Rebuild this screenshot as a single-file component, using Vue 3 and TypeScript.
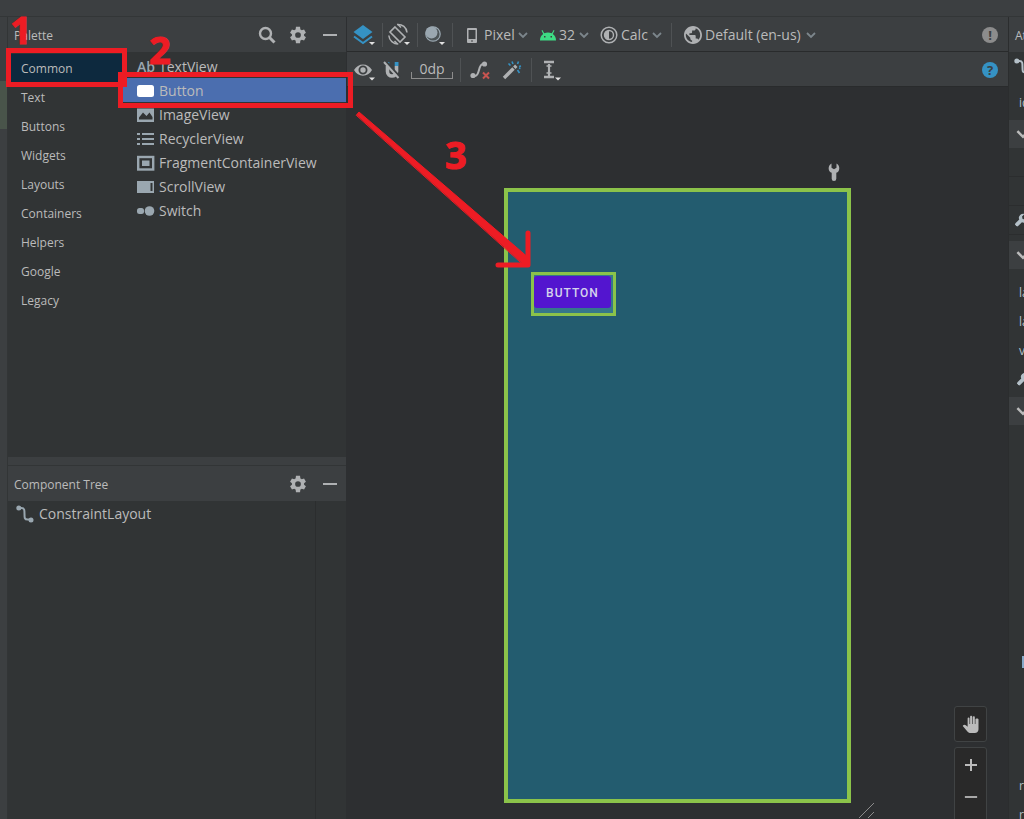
<script setup lang="ts">
import { ref } from 'vue'

interface PaletteItem {
  name: string
  icon: string
}

interface DeviceOption {
  id: string
  label: string
  icon: string
  value: string
}

const categories: string[] = [
  'Common', 'Text', 'Buttons', 'Widgets', 'Layouts', 'Containers', 'Helpers', 'Google', 'Legacy',
]

const items: PaletteItem[] = [
  { name: 'TextView', icon: 'ab' },
  { name: 'Button', icon: 'button' },
  { name: 'ImageView', icon: 'image' },
  { name: 'RecyclerView', icon: 'list' },
  { name: 'FragmentContainerView', icon: 'fragment' },
  { name: 'ScrollView', icon: 'scroll' },
  { name: 'Switch', icon: 'switch' },
]

const deviceOptions: DeviceOption[] = [
  { id: 'model', label: 'Device for preview', icon: 'phone', value: 'Pixel' },
  { id: 'api', label: 'API version', icon: 'android', value: '32' },
  { id: 'theme', label: 'Theme', icon: 'theme', value: 'Calc' },
]

const activeCategory = ref('Common')
const activeItem = ref('Button')
</script>

<template>
  <div class="ide">
    <svg class="sprite" aria-hidden="true">
      <symbol id="i-search" viewBox="0 0 20 20">
        <circle cx="9.500" cy="8.500" r="5.500" fill="none" stroke="currentColor" stroke-width="2.400" />
        <path d="M13.500 12.500 18.500 17.500" stroke="currentColor" stroke-width="3" />
      </symbol>
      <symbol id="i-gear" viewBox="1 1 22 22">
        <path fill="currentColor" fill-rule="evenodd" d="M19.400 13a7.500 7.500 0 0 0 0-2l2.300-1.800-2.300-4-2.800 1.100a8 8 0 0 0-1.700-1L14.500 2h-5l-.400 3.300a8 8 0 0 0-1.700 1L4.600 5.200l-2.300 4L4.600 11a7.500 7.500 0 0 0 0 2l-2.300 1.800 2.300 4 2.800-1.100a8 8 0 0 0 1.700 1l.400 3.300h5l.400-3.300a8 8 0 0 0 1.700-1l2.800 1.100 2.300-4zM12 15.500a3.500 3.500 0 1 1 0-7 3.500 3.500 0 0 1 0 7z" />
      </symbol>
      <symbol id="i-minus" viewBox="0 0 16 16"><path d="M1 8h14" stroke="currentColor" stroke-width="2" /></symbol>
      <symbol id="i-chevron" viewBox="0 0 10 10">
        <path d="M1 3l4 4 4-4" fill="none" stroke="currentColor" stroke-width="1.800" />
      </symbol>
      <symbol id="i-button" viewBox="0 0 18 18"><rect x="0" y="3" width="17" height="12" rx="2.500" fill="#fff" /></symbol>
      <symbol id="i-image" viewBox="0 0 18 18">
        <path fill="currentColor" fill-rule="evenodd" d="M0 2.500h17v13.500H0zM2 13.500h13.500v-2.500l-3-4.500-3 3.500L6 6.500l-4 5z" />
      </symbol>
      <symbol id="i-list" viewBox="0 0 18 18">
        <path d="M0 4h3M5 4h12M0 9h3M5 9h12M0 14h3M5 14h12" stroke="currentColor" stroke-width="2" />
      </symbol>
      <symbol id="i-fragment" viewBox="0 0 18 18">
        <rect x="1.200" y="3" width="15" height="12.500" fill="none" stroke="currentColor" stroke-width="2.400" />
        <rect x="5" y="6.500" width="7.500" height="5.500" fill="currentColor" />
      </symbol>
      <symbol id="i-scroll" viewBox="0 0 18 18">
        <path fill="currentColor" d="M0 3h12v12H0zM12 3h5v12h-5zM13.500 5v8h2V5z" fill-rule="evenodd" />
      </symbol>
      <symbol id="i-switch" viewBox="0 0 18 18">
        <rect x="0" y="6" width="7" height="6" rx="2.500" fill="currentColor" />
        <circle cx="12.500" cy="9" r="4.800" fill="currentColor" />
      </symbol>
      <symbol id="i-constraint" viewBox="0 0 18 18">
        <path d="M3 3h2.500c3 0 3 2 3 6s0 5.500 3 5.500H15" fill="none" stroke="currentColor" stroke-width="2" />
        <circle cx="2.800" cy="3" r="2.500" fill="currentColor" /><circle cx="15" cy="15" r="2.500" fill="currentColor" />
      </symbol>
      <symbol id="i-layers" viewBox="0 0 24 24">
        <path d="M10 2l9.500 7-9.500 7-9.500-7z" fill="#3592c4" />
        <path d="M1 13.500l9 6.500 9-6.500" fill="none" stroke="#3592c4" stroke-width="2" />
        <path d="M16 19h6l-3 3z" fill="#e0e0e0" />
      </symbol>
      <symbol id="i-rotate" viewBox="0 0 24 24">
        <path d="M7 4l10 10-5 5-10-10z" fill="none" stroke="currentColor" stroke-width="1.600" />
        <path d="M9 1.500c5.500-.5 9.500 3 10 8M.8 12.500c.5 5 4.500 8.500 9.500 8.500" fill="none" stroke="currentColor" stroke-width="1.500" />
        <path d="M10 1.500l3 3M9.500 21l-3-3" stroke="currentColor" stroke-width="1.500" />
        <path d="M16 19h6l-3 3z" fill="#e0e0e0" />
      </symbol>
      <symbol id="i-night" viewBox="0 0 24 24">
        <circle cx="10" cy="11" r="7.600" fill="#4c5457" />
        <circle cx="8.500" cy="9.500" r="6" fill="#9aa7b0" />
        <circle cx="10" cy="11" r="7.200" fill="none" stroke="#9aa7b0" stroke-width="1.200" />
        <path d="M16 19h6l-3 3z" fill="#e0e0e0" />
      </symbol>
      <symbol id="i-phone" viewBox="0 0 18 18">
        <path fill="currentColor" fill-rule="evenodd" d="M4 2h8a1 1 0 0 1 1 1v13a1 1 0 0 1-1 1H4a1 1 0 0 1-1-1V3a1 1 0 0 1 1-1zM4.500 4v9h7V4zM7 14.500v1h2v-1z" />
      </symbol>
      <symbol id="i-android" viewBox="0 0 18 18">
        <path fill="#3ddc84" fill-rule="evenodd" d="M1 14.500A8 8 0 0 1 4.200 8L2.500 4.500l.9-.5L5.200 7.300a9 9 0 0 1 7.600 0L14.600 4l.9.500L13.800 8a8 8 0 0 1 3.200 6.500zM5 10v1.500h1.500V10zM11.500 10v1.500H13V10z" />
      </symbol>
      <symbol id="i-theme" viewBox="0 0 18 18">
        <circle cx="9" cy="9" r="7.800" fill="none" stroke="currentColor" stroke-width="1.500" />
        <circle cx="9" cy="9" r="4.500" fill="none" stroke="currentColor" stroke-width="1.400" />
        <path d="M9 4.500a4.500 4.500 0 0 0 0 9z" fill="currentColor" />
      </symbol>
      <symbol id="i-globe" viewBox="2 2 20 20">
        <path fill="currentColor" d="M12 2C6.500 2 2 6.500 2 12s4.500 10 10 10 10-4.500 10-10S17.500 2 12 2zm-1 17.900c-4-.500-7-3.900-7-7.900 0-.600.100-1.200.200-1.800L9 15v1c0 1.100.900 2 2 2zm6.900-2.500c-.300-.800-1-1.400-1.900-1.400h-1v-3c0-.600-.400-1-1-1H8v-2h2c.600 0 1-.400 1-1V7h2c1.100 0 2-.900 2-2v-.400c2.900 1.200 5 4.100 5 7.400 0 2.100-.800 4-2.100 5.400z" />
      </symbol>
      <symbol id="i-eye" viewBox="0 0 24 24">
        <path fill="currentColor" fill-rule="evenodd" d="M1 12c4-7.500 14-7.500 18 0-4 7.500-14 7.500-18 0zM10 7.500a4.500 4.500 0 1 0 0 9 4.500 4.500 0 0 0 0-9z" />
        <circle cx="10" cy="12" r="2.700" fill="currentColor" />
        <path d="M16 19.500h6l-3 3z" fill="#e0e0e0" />
      </symbol>
      <symbol id="i-magnet" viewBox="0 0 20 20">
        <path d="M5.500 6v5.500c0 6 9 6 9 0V6" fill="none" stroke="currentColor" stroke-width="3.600" />
        <path d="M12.700 2h3.800v4h-3.800z" fill="#3592c4" />
        <path d="M4 2h3.300v3z" fill="#3592c4" />
        <path d="M3.500 1L18 17" stroke="#3c3f41" stroke-width="2" />
        <path d="M2 2L16.500 18" stroke="currentColor" stroke-width="2" />
      </symbol>
      <symbol id="i-clear" viewBox="0 0 20 20">
        <path d="M2 16h3c5 0 3-12 8-12h2" fill="none" stroke="currentColor" stroke-width="2" />
        <circle cx="3" cy="15.500" r="2.600" fill="currentColor" /><circle cx="14.500" cy="4" r="2.600" fill="currentColor" />
        <path d="M13 12.500l6 6M19 12.500l-6 6" stroke="#c75450" stroke-width="2" />
      </symbol>
      <symbol id="i-wand" viewBox="0 0 20 20">
        <path d="M2 18L11.500 8.500" stroke="currentColor" stroke-width="3.400" />
        <path d="M12.300 7.700l2-2" stroke="currentColor" stroke-width="3.400" />
        <path d="M10 1.500l1 2.500M16.500 1.500l-1 2.500M19 6l-2 .500M15.500 10l2 3M6.500 3.500l2 2M18.500 8.500l-1.500-.500" stroke="#3592c4" stroke-width="1.600" />
      </symbol>
      <symbol id="i-guide" viewBox="0 0 24 24">
        <path d="M3 4h10M3 19h10" stroke="currentColor" stroke-width="2.600" />
        <path d="M8 6v12" stroke="currentColor" stroke-width="2.200" />
        <path d="M5.500 8h5M5.500 15h5" stroke="currentColor" stroke-width="1.400" />
        <path d="M14 19.500h6l-3 3z" fill="#e0e0e0" />
      </symbol>
      <symbol id="i-wrench" viewBox="0 0 12 18">
        <path fill="currentColor" d="M3.500.500C.500 2 0 6 1.500 8.200c.500.700 1.300 1.200 2.200 1.500V15.700a2.300 2.300 0 0 0 4.600 0V9.700c.900-.300 1.700-.800 2.200-1.500C12 6 11.500 2 8.500.500v4.200L6 6.300 3.500 4.700z" />
      </symbol>
      <symbol id="i-hand" viewBox="0 0 24 24">
        <path fill="currentColor" d="M22 6v13c0 3-2 5-5 5h-5.500c-1.500 0-3-.700-4-1.800L1 14.500s1-1.500 2.500-1.400c.500 0 2.500 1.300 4 2.400V4.500C7.500 3 10 3 10 4.500V12h.800V2.500c0-1.800 2.800-1.800 2.800 0V12h.800V3c0-1.700 2.700-1.700 2.700 0v9h.800V6c0-1.700 4.100-1.700 4.100 0z" />
      </symbol>
      <symbol id="i-plus" viewBox="0 0 14 14"><path d="M1 7h12M7 1v12" stroke="currentColor" stroke-width="2" /></symbol>
    </svg>

    <div class="top-strip"></div>

    <div class="workspace">
      <div class="gutter"><div class="gutter-mark"></div></div>

      <aside class="side">
        <section class="palette">
          <header class="panel-head">
            <h2>Palette</h2>
            <button type="button" aria-label="Search"><svg class="ic20"><use href="#i-search" /></svg></button>
            <button type="button" aria-label="Palette settings"><svg class="ic18"><use href="#i-gear" /></svg></button>
            <button type="button" aria-label="Hide palette"><svg class="ic16"><use href="#i-minus" /></svg></button>
          </header>
          <div class="palette-body">
            <nav class="categories">
              <button
                v-for="c in categories" :key="c" type="button"
                :class="{ active: c === activeCategory }" @click="activeCategory = c"
              >{{ c }}</button>
            </nav>
            <div class="items">
              <button
                v-for="i in items" :key="i.name" type="button"
                :class="{ active: i.name === activeItem }" @click="activeItem = i.name"
              >
                <span v-if="i.icon === 'ab'" class="ab">Ab</span>
                <svg v-else class="ic18"><use :href="'#i-' + i.icon" /></svg>
                <span>{{ i.name }}</span>
              </button>
            </div>
          </div>
        </section>

        <div class="splitter"></div>

        <section class="tree">
          <header class="panel-head">
            <h2>Component Tree</h2>
            <button type="button" aria-label="Tree settings"><svg class="ic18"><use href="#i-gear" /></svg></button>
            <button type="button" aria-label="Hide tree"><svg class="ic16"><use href="#i-minus" /></svg></button>
          </header>
          <div class="tree-body">
            <div class="tree-list">
              <button type="button"><svg class="ic18"><use href="#i-constraint" /></svg>ConstraintLayout</button>
            </div>
            <div class="tree-rail"></div>
          </div>
        </section>
      </aside>

      <main class="editor">
        <div class="toolbar">
          <button type="button" class="tool" aria-label="Design surface"><svg class="ic24"><use href="#i-layers" /></svg></button>
          <i class="sep"></i>
          <button type="button" class="tool" aria-label="Orientation"><svg class="ic24"><use href="#i-rotate" /></svg></button>
          <i class="sep"></i>
          <button type="button" class="tool" aria-label="Night mode"><svg class="ic24"><use href="#i-night" /></svg></button>
          <i class="sep"></i>
          <div class="pickers">
            <label v-for="o in deviceOptions" :key="o.id" class="picker" :class="o.id">
              <svg class="ic18"><use :href="'#i-' + o.icon" /></svg>
              <select :aria-label="o.label"><option>{{ o.value }}</option></select>
              <svg class="ic10"><use href="#i-chevron" /></svg>
            </label>
          </div>
          <i class="sep"></i>
          <label class="picker locale">
            <svg class="ic18"><use href="#i-globe" /></svg>
            <select aria-label="Locale"><option>Default (en-us)</option></select>
            <svg class="ic10"><use href="#i-chevron" /></svg>
          </label>
          <button type="button" class="round warn" aria-label="Issues">!</button>
        </div>

        <div class="toolbar second">
          <button type="button" class="tool eye" aria-label="View options"><svg class="ic24"><use href="#i-eye" /></svg></button>
          <button type="button" class="tool magnet" aria-label="Autoconnect"><svg class="ic20"><use href="#i-magnet" /></svg></button>
          <button type="button" class="margin">0dp</button>
          <i class="sep"></i>
          <button type="button" class="tool" aria-label="Clear constraints"><svg class="ic20"><use href="#i-clear" /></svg></button>
          <button type="button" class="tool" aria-label="Infer constraints"><svg class="ic20"><use href="#i-wand" /></svg></button>
          <i class="sep"></i>
          <button type="button" class="tool guide" aria-label="Guidelines"><svg class="ic24"><use href="#i-guide" /></svg></button>
          <button type="button" class="round help" aria-label="Help">?</button>
        </div>

        <div class="canvas">
          <div class="device">
            <svg class="device-tool"><use href="#i-wrench" /></svg>
            <div class="widget"><button type="button">BUTTON</button></div>
            <svg class="grip" viewBox="0 0 18 18"><path d="M1 17L16 2M10 17L16 11" stroke="#8c8c8c" fill="none" /></svg>
          </div>
          <div class="zoom">
            <button type="button" class="zoom-box" aria-label="Pan"><svg class="ic18"><use href="#i-hand" /></svg></button>
            <div class="zoom-box zoom-group">
              <button type="button" aria-label="Zoom in"><svg class="ic14"><use href="#i-plus" /></svg></button>
              <button type="button" aria-label="Zoom out"><svg class="ic14"><use href="#i-minus" /></svg></button>
            </div>
          </div>
        </div>
      </main>

      <aside class="attributes">
        <h2>At</h2>
        <div class="attr-row root"><svg class="ic18"><use href="#i-constraint" /></svg></div>
        <div class="attr-row id">id</div>
        <div class="attr-section"><svg class="ic14"><use href="#i-chevron" /></svg></div>
        <div class="attr-row lined"></div>
        <div class="attr-row lined"></div>
        <div class="attr-row lined"><svg class="tilted"><use href="#i-wrench" /></svg></div>
        <div class="attr-section next"><svg class="ic14"><use href="#i-chevron" /></svg></div>
        <div class="attr-group">
          <div class="attr-row">la</div>
          <div class="attr-row">la</div>
          <div class="attr-row">vi</div>
          <div class="attr-row tool-row"><svg class="tilted"><use href="#i-wrench" /></svg></div>
        </div>
        <div class="attr-section"><svg class="ic14"><use href="#i-chevron" /></svg></div>
        <div class="attr-mark"></div>
        <div class="attr-group last">
          <div class="attr-row">ro</div>
          <div class="attr-row">ro</div>
        </div>
      </aside>
    </div>

    <svg class="notes" viewBox="0 0 1024 819" width="1024" height="819">
      <rect x="8.500" y="50.500" width="116" height="34" />
      <rect x="120.500" y="74.500" width="230" height="31" />
      <path d="M356.500 115L359 112L530 259L524 265z" class="shaft" />
      <path d="M528 233V265M498 265H528" class="head" />
      <text x="10" y="44">1</text>
      <text x="149" y="64">2</text>
      <text x="445" y="169">3</text>
    </svg>
  </div>
</template>

<style>
body {
  margin: 0;
  background: #2d2f31;
}
</style>

<style scoped>
.ide {
  position: relative;
  display: flex;
  flex-direction: column;
  height: 100vh;
  min-height: 600px;
  overflow: hidden;
  background: #3c3f41;
  color: #bbbbbb;
  font: 14px/20px "Open Sans", "Noto Sans", sans-serif;
}
.ide *, .ide { box-sizing: border-box; }
.sprite { position: absolute; width: 0; height: 0; }
svg { display: block; flex: none; }
button, select {
  margin: 0;
  padding: 0;
  border: 0;
  background: none;
  color: inherit;
  font: inherit;
}
select { appearance: none; cursor: pointer; }
h2 { margin: 0; font-size: 12px; font-weight: 400; }
.ic10 { width: 10px; height: 10px; }
.ic14 { width: 14px; height: 14px; }
.ic16 { width: 16px; height: 16px; }
.ic18 { width: 18px; height: 18px; }
.ic20 { width: 20px; height: 20px; }
.ic24 { width: 24px; height: 24px; }

.top-strip { flex: none; height: 17px; border-bottom: 1px solid #333637; }
.workspace { flex: 1; display: flex; min-height: 0; }
.gutter { flex: none; width: 7px; padding-top: 64px; }
.gutter-mark { height: 48px; background: #49544a; }

.side {
  flex: none;
  display: flex;
  flex-direction: column;
  width: 340px;
  border-left: 1px solid #323536;
  border-right: 1px solid #2d2f31;
  background: #313435;
}
.panel-head {
  display: flex;
  align-items: center;
  height: 35px;
  padding-left: 6px;
  background: #3c3f41;
}
.panel-head h2 { flex: 1; padding-top: 3px; }
.panel-head button { display: flex; justify-content: center; width: 32px; color: #afb1b3; }
.palette { flex: none; height: 440px; }
.palette-body { display: flex; padding-top: 2px; }
.categories { display: flex; flex-direction: column; width: 115px; }
.categories button { height: 29px; padding: 0 0 0 13px; text-align: left; font-size: 12px; }
.categories .active { background: #0d293e; }
.items { flex: 1; display: flex; flex-direction: column; }
.items button { display: flex; align-items: center; gap: 4px; height: 24px; padding: 1px 0 0 14px; }
.items .active { background: #4b6eaf; }
.items svg { color: #9aa7b0; }
.ab { width: 18px; color: #9aa7b0; font-weight: 600; }
.splitter { flex: none; height: 9px; background: #3c3f41; border-bottom: 1px solid #323536; }
.tree { flex: 1; display: flex; flex-direction: column; }
.tree-body { flex: 1; display: flex; }
.tree-list { flex: 1; padding: 3px 8px; }
.tree-list button { display: flex; align-items: center; gap: 5px; height: 20px; }
.tree-list svg { color: #9aa7b0; }
.tree-rail { width: 31px; border-left: 1px solid #2b2d2e; }

.editor { flex: 1; display: flex; flex-direction: column; min-width: 0; }
.toolbar {
  flex: none;
  display: flex;
  align-items: center;
  height: 35px;
  padding: 1px 10px 0 6px;
  border-bottom: 1px solid #292b2c;
  background: #3c3f41;
  color: #afb1b3;
}
.sep { flex: none; width: 1px; height: 24px; background: #4f5254; margin: 0 5px; }
.pickers { display: flex; gap: 11px; padding: 0 4px 0 6px; }
.picker { display: flex; align-items: center; gap: 3px; color: #afb1b3; }
.picker select { color: #bbbbbb; }
.picker .ic10 { color: #7c868c; }
.model { gap: 2px; }
.model select { width: 32px; }
.api { gap: 2px; }
.api select { width: 18px; }
.theme select { width: 28px; }
.locale { padding-left: 7px; gap: 3px; }
.locale select { width: 98px; }
.round {
  width: 16px;
  height: 16px;
  margin-left: auto;
  border-radius: 50%;
  color: #3c3f41;
  font-size: 13px;
  font-weight: 700;
  line-height: 16px;
  text-align: center;
}
.warn { background: #8c8c8c; }
.help { background: #3592c4; }
.magnet { margin-left: 5px; }
.margin {
  width: 42px;
  height: 18px;
  margin: 0 2px 0 9px;
  line-height: 16px;
  color: #bbbbbb;
  border-bottom: 1px solid #8c8c8c;
  background: linear-gradient(#8c8c8c, #8c8c8c) left bottom / 1px 6px no-repeat,
    linear-gradient(#8c8c8c, #8c8c8c) right bottom / 1px 6px no-repeat;
}
.second .sep + .tool { margin: 0 12px 0 4px; }
.second .tool + .sep { margin-left: 9px; }

.canvas {
  position: relative;
  flex: 1;
  display: flex;
  justify-content: center;
  align-items: flex-start;
  padding-top: 101px;
  background: #2d2f31;
}
.device {
  position: relative;
  width: 347px;
  height: 615px;
  border: 4px solid #8bc34a;
  background: #235c6f;
}
.device-tool { position: absolute; right: 7px; top: -29px; width: 12px; height: 18px; color: #afb1b3; }
.widget {
  position: absolute;
  left: 23px;
  top: 80px;
  width: 85px;
  height: 44px;
  padding: 1px 2px 6px 0;
  border: 3px solid #8bc34a;
  background: #35788a;
}
.widget button {
  display: block;
  width: 100%;
  height: 32px;
  border-radius: 3px;
  background: #5315cf;
  color: #d5d3ec;
  font: 500 12px/34px Roboto, sans-serif;
  letter-spacing: 1px;
}
.grip { position: absolute; right: -29px; bottom: -20px; width: 18px; height: 18px; }
.zoom { position: absolute; right: 21px; bottom: -8px; display: grid; gap: 5px; }
.zoom-box {
  display: flex;
  align-items: center;
  justify-content: center;
  width: 33px;
  height: 36px;
  border: 1px solid #404344;
  border-radius: 3px;
  background: #292929;
  color: #bbbbbb;
}
.zoom-group { flex-direction: column; justify-content: flex-start; gap: 18px; height: 80px; padding-top: 10px; }

.attributes {
  flex: none;
  width: 16px;
  overflow: hidden;
  border-left: 1px solid #2b2d2e;
  background: #313435;
  font-size: 12px;
  white-space: nowrap;
}
.attributes h2 { height: 35px; padding-left: 6px; line-height: 38px; background: #3c3f41; }
.attr-row { display: flex; align-items: center; height: 29px; padding-left: 10px; color: #b4c0c8; }
.attr-row.root { padding-left: 5px; }
.attr-row.id { height: 39px; padding-top: 4px; }
.attr-row.lined { border-bottom: 1px solid #2b2d2e; padding-left: 7px; }
.attr-section { display: flex; align-items: center; height: 28px; padding-left: 7px; background: #3c3f41; }
.attr-section.next { margin-top: 6px; }
.attr-group { padding: 9px 0 4px; }
.attr-row.tool-row { padding-left: 9px; height: 28px; }
.tilted { width: 10px; height: 15px; transform: rotate(45deg); }
.attr-mark { width: 2px; height: 12px; margin: 231px 0 0 13px; background: #87a9c9; }
.attr-group.last { padding-top: 103px; }

.notes { position: absolute; left: 0; top: 0; pointer-events: none; }
.notes rect { fill: none; stroke: #ed1c24; stroke-width: 5px; }
.notes path { stroke: #ed1c24; stroke-linecap: round; stroke-linejoin: round; }
.notes .shaft { fill: #ed1c24; stroke-width: 1px; }
.notes .head { fill: none; stroke-width: 5px; }
.notes text {
  fill: #ed1c24;
  stroke: #ed1c24;
  stroke-width: 1px;
  font: 700 38px "Open Sans", "Noto Sans", sans-serif;
}
</style>
